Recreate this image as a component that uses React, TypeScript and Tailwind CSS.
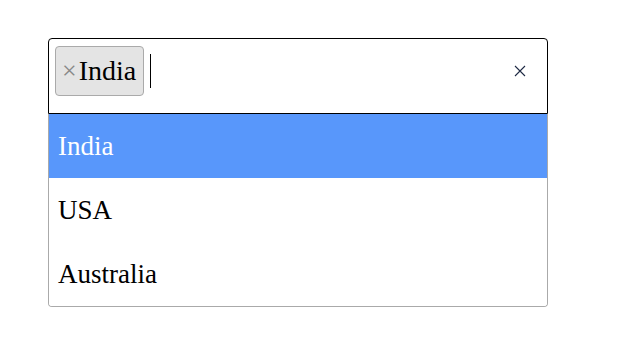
import React from 'react';

const options = ['India', 'USA', 'Australia'];

export default function App() {
  return (
    <div className="min-h-screen bg-white pt-[38px] pl-[48px] font-['Liberation_Serif',serif] text-black">
      <div className="w-[500px]">
        {/* control */}
        <div className="h-[76px] border border-black rounded-t-[4px] pl-[6px] pr-[21px] pt-[7px] flex items-start">
          <div className="h-[50px] flex items-center flex-1">
            <div className="h-[50px] flex items-center bg-[#e4e4e4] border border-[#aaaaaa] rounded-[4px] pl-[6px] pr-[7px]">
              <span className="text-[26px] leading-none text-[#888888] mr-[2px]">×</span>
              <span className="text-[28px] leading-none text-black">India</span>
            </div>
            <div className="ml-[6px] w-px h-[34px] bg-black" />
          </div>
          <div className="h-[50px] flex items-center">
            <svg width="12" height="12" viewBox="0 0 12 12" className="text-[#1e2a44]">
              <path d="M1 1L11 11M11 1L1 11" stroke="currentColor" strokeWidth="1.1" />
            </svg>
          </div>
        </div>
        {/* dropdown */}
        <div className="border-x border-b border-[#aaaaaa] rounded-b-[4px] overflow-hidden">
          {options.map((o, i) => (
            <div
              key={o}
              className={`h-[64px] flex items-center px-[9px] text-[27px] leading-none ${
                i === 0 ? 'bg-[#5897fb] text-white' : 'bg-white text-black'
              }`}
            >
              {o}
            </div>
          ))}
        </div>
      </div>
    </div>
  );
}
